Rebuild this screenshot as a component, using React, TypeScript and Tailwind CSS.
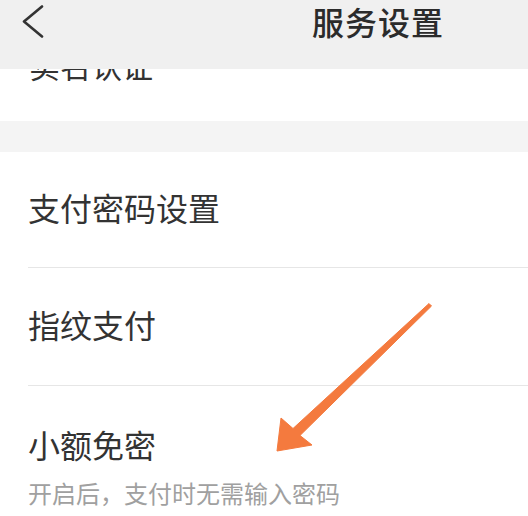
export default function App() {
  const rows = [
    { title: "支付密码设置", height: "h-[116px]" },
    { title: "指纹支付", height: "h-[118px]" },
  ];

  return (
    <div
      className="relative w-[528px] h-[516px] overflow-hidden bg-white text-[#333]"
      style={{ fontFamily: '"Noto Sans CJK SC", "Noto Sans", sans-serif' }}
    >
      {/* Header */}
      <header className="relative z-10 flex items-start h-[69px] bg-[#f0f0f0]">
        <button className="ml-[21px] mt-[5px]">
          <svg width="24" height="34" viewBox="0 0 24 34" fill="none">
            <path
              d="M21 1.5L3 16.5L21 31.5"
              stroke="#333"
              strokeWidth="2.6"
              strokeLinecap="round"
              strokeLinejoin="round"
            />
          </svg>
        </button>
        <h1 className="ml-[267px] mt-[1px] text-[32px] leading-[40px] font-medium tracking-[1px] text-[#2b2b2b]">
          服务设置
        </h1>
      </header>

      {/* Row hidden under header */}
      <div className="h-[52px] overflow-hidden bg-white">
        <div className="-mt-[20px] pl-[29px] text-[31px] leading-none">实名认证</div>
      </div>

      {/* Section gap */}
      <div className="h-[31px] bg-[#f4f4f4]" />

      {/* Settings list */}
      <div className="pl-[28px]">
        {rows.map((row) => (
          <div
            key={row.title}
            className={`flex items-center pb-[6px] ${row.height} border-b border-[#e6e6e6] text-[32px] leading-[40px]`}
          >
            {row.title}
          </div>
        ))}
        <div className="flex flex-col pt-[38px]">
          <span className="text-[32px] leading-[40px]">小额免密</span>
          <span className="mt-[14px] text-[24px] leading-[30px] text-[#a0a0a0]">
            开启后，支付时无需输入密码
          </span>
        </div>
      </div>

      {/* Annotation arrow */}
      <svg
        className="absolute left-0 top-0 pointer-events-none"
        width="528"
        height="516"
        viewBox="0 0 528 516"
      >
        <polygon
          points="431.5,306 300,435.5 312,445 277,451 281,418 293,428.5 429,303.5"
          fill="#f47a3e"
          strokeLinejoin="round"
          stroke="#f47a3e"
          strokeWidth="1"
        />
      </svg>
    </div>
  );
}
